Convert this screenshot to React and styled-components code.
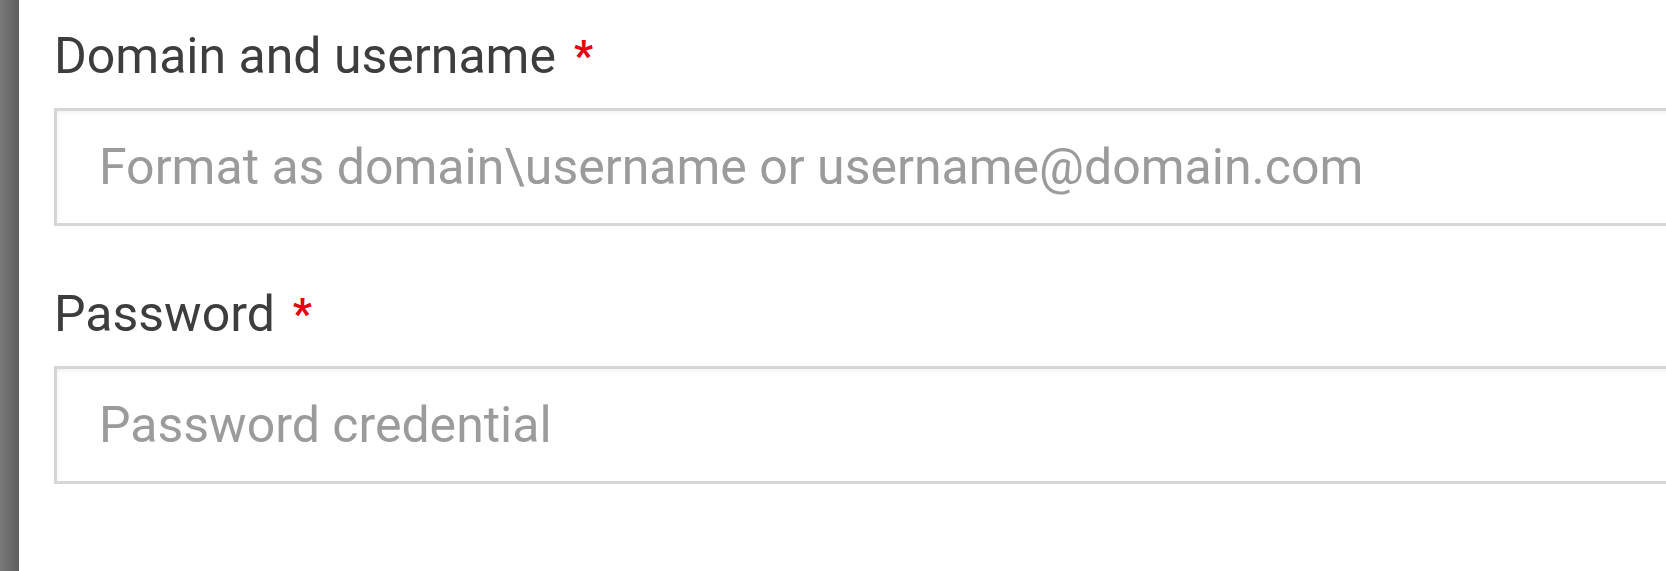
import styled, { createGlobalStyle } from "styled-components"

const GlobalStyle = createGlobalStyle`
  html, body {
    margin: 0;
    padding: 0;
    background: #ffffff;
    overflow: hidden;
  }
  body {
    font-family: Roboto, "Noto Sans", sans-serif;
  }
`

const Page = styled.div`
  display: flex;
  width: 1666px;
  height: 571px;
  overflow: hidden;
`

const Edge = styled.div`
  flex: 0 0 19px;
  background: linear-gradient(to right, #7a7a7a, #5e5e5e);
`

const Form = styled.form`
  flex: 1;
  display: flex;
  flex-direction: column;
  padding: 21px 0 0 35px;
  min-width: 0;
`

const Field = styled.div`
  display: flex;
  flex-direction: column;
  margin-bottom: ${(p) => p.gap || 0}px;
`

const Label = styled.label`
  display: flex;
  align-items: flex-start;
  height: 70px;
  margin-bottom: 17px;
  font-size: 50px;
  line-height: 70px;
  color: #3d3d3d;
`

const Required = styled.span`
  color: #e60012;
  font-size: 42px;
  font-weight: 700;
  line-height: 1;
  margin-left: 18px;
  margin-top: 14px;
`

const Input = styled.input`
  box-sizing: border-box;
  width: 100%;
  height: 118px;
  padding: 0 0 0 42px;
  border: 3px solid #d6d6d6;
  border-right: none;
  border-radius: 0;
  box-shadow: inset 2px 4px 5px -2px rgba(0, 0, 0, 0.06);
  background: #ffffff;
  font-family: inherit;
  font-size: 50px;
  color: #3d3d3d;
  outline: none;
  &::placeholder {
    color: #9b9b9b;
  }
`

export default function App() {
  return (
    <Page>
      <GlobalStyle />
      <Edge />
      <Form>
        <Field gap={53}>
          <Label htmlFor="account">
            Domain and username<Required>*</Required>
          </Label>
          <Input
            id="account"
            type="text"
            placeholder="Format as domain\username or username@domain.com"
          />
        </Field>
        <Field>
          <Label htmlFor="secret">
            Password<Required>*</Required>
          </Label>
          <Input id="secret" type="password" placeholder="Password credential" />
        </Field>
      </Form>
    </Page>
  )
}
